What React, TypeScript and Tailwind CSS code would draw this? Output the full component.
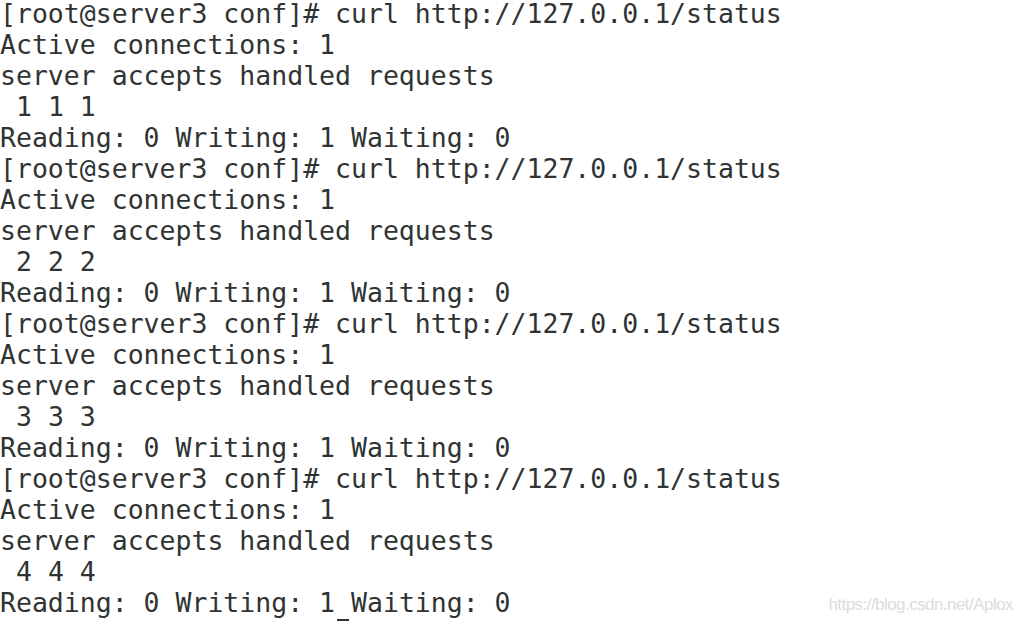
const blocks = ["1 1 1", "2 2 2", "3 3 3", "4 4 4"];

export default function App() {
  return (
    <div className="relative w-[1024px] h-[621px] overflow-hidden bg-white">
      <div className="-mt-[2px] font-['DejaVu_Sans_Mono',monospace] text-[26.5px] leading-[31px] text-[#2e3436] whitespace-pre">
        {blocks.map((nums, i) => (
          <div key={i}>
            <div>[root@server3 conf]# curl http://127.0.0.1/status</div>
            <div>Active connections: 1</div>
            <div>server accepts handled requests</div>
            <div> {nums}</div>
            {i < 3 ? (
              <div>Reading: 0 Writing: 1 Waiting: 0</div>
            ) : (
              <div>
                Reading: 0 Writing: 1
                <span className="relative">
                  {" "}
                  <span className="absolute left-[2px] w-[12px] top-[32px] h-[4px] bg-[#2e3436]" />
                </span>
                Waiting: 0
              </div>
            )}
          </div>
        ))}
      </div>
      <div className="absolute right-[11px] bottom-[8px] font-['Liberation_Sans',sans-serif] text-[17px] leading-none tracking-[-0.55px] text-[#dcdcdc]">
        https://blog.csdn.net/Aplox
      </div>
    </div>
  );
}
